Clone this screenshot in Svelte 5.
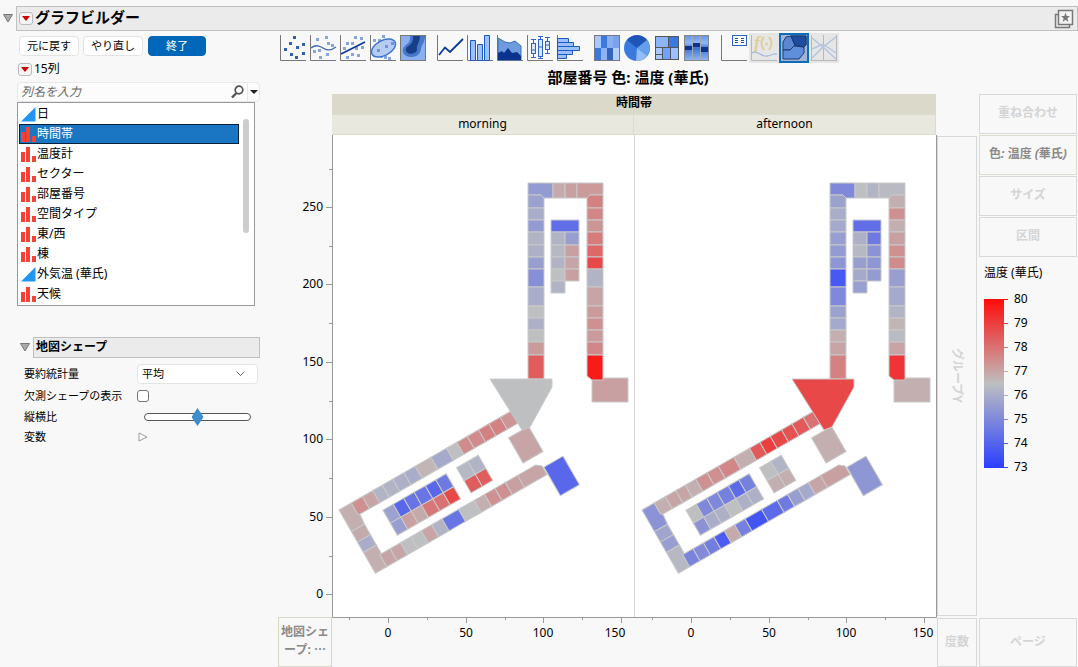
<script>
  let columns = [
    { name: "日", kind: "continuous" },
    { name: "時間帯", kind: "nominal" },
    { name: "温度計", kind: "nominal" },
    { name: "セクター", kind: "nominal" },
    { name: "部屋番号", kind: "nominal" },
    { name: "空間タイプ", kind: "nominal" },
    { name: "東/西", kind: "nominal" },
    { name: "棟", kind: "nominal" },
    { name: "外気温 (華氏)", kind: "continuous" },
    { name: "天候", kind: "nominal" }
  ];
  let selected = $state(1);
  let tool = $state("地図シェープ");

  const axes = `<path d="M2.500 2V27.500H28" fill="none" stroke="#777"/>`;
  const dots = (points, fill) =>
    points.map(([x, y]) => `<rect x="${x - 1}" y="${y - 1}" width="3" height="3" fill="${fill}"/>`).join("");

  const toolGroups = [
    [
      { name: "点", art: axes + dots([[16, 4], [12, 10], [25, 11], [7, 16], [19, 14], [13, 21], [25, 20], [18, 24]], "#2b62b8") },
      {
        name: "平滑線",
        art: axes + dots([[9, 6], [18, 4], [20, 10], [24, 12], [6, 18], [11, 17], [19, 21], [12, 24]], "#86a6dc") +
          `<path d="M3 15C8 11 12 13 16 15.500S24 17 28 14" fill="none" stroke="#3c66b0" stroke-width="1.300"/>`
      },
      {
        name: "あてはめ線",
        art: axes + dots([[17, 4], [9, 10], [14, 10], [23, 5], [6, 15], [24, 14], [18, 15], [9, 24], [14, 21], [20, 22]], "#86a6dc") +
          `<path d="M3 21L27 9" stroke="#0c3a9c" stroke-width="1.800"/>`
      },
      {
        name: "楕円",
        art: axes + dots([[6, 7], [15, 3], [11, 7], [6, 22], [13, 23], [17, 24], [21, 25]], "#86a6dc") +
          `<ellipse cx="15.500" cy="15" rx="13" ry="7.500" transform="rotate(-28 15.500 15)" fill="#b5cdf5" stroke="#3f74d0" stroke-width="1.500"/>` +
          dots([[18, 13], [24, 10], [10, 17]], "#6f94d8")
      },
      {
        name: "等高線",
        art: `<rect x="2.500" y="2.500" width="25" height="25" fill="#8ab0f0" stroke="#777"/>
          <path d="M12 3H27C27 9 24 11 23 16C22 22 18 24 13 24C7 24 4 20 5 16C6 11 13 12 12 3Z" fill="#4677c8"/>
          <path d="M15 3H22C22 9 18 12 19 17C18 22 8 22 8 17C8 12 16 13 15 3Z" fill="#173f88"/>`
      }
    ],
    [
      { name: "折れ線", art: axes + `<path d="M4 22L10 14.500L15 19L28 6" fill="none" stroke="#0c3a9c" stroke-width="1.800"/>` },
      {
        name: "棒",
        art: axes + `<g fill="#9cc0ff" stroke="#1c5cc0"><path d="M5.500 27.500V7.500H10.500V27.500Z"/><path d="M12.500 27.500V11.500H17.500V27.500Z"/><path d="M19.500 27.500V2.500H24.500V27.500Z"/></g>`
      },
      {
        name: "面積",
        art: axes + `<path d="M3 5L10 9L15 10L20 8L26 13V27H3Z" fill="#6d9bdc" stroke="#3a72b8"/>
          <path d="M3 20L7 18L9 20L13 15L17 20L22 19L26 23V27H3Z" fill="#0b328c"/>`
      },
      {
        name: "箱ひげ図",
        art: axes + `<g fill="#d9e7ff" stroke="#2c67c8"><path d="M8.500 7V10M8.500 21V24M6 6.500H11M6 24.500H11M15.500 3V6M15.500 23V26M13 3.500H18M13 25.500H18M22.500 4V8M22.500 16V20M20 4.500H25M20 20.500H25"/>
          <rect x="6.500" y="10.500" width="4" height="10"/><rect x="13.500" y="6.500" width="4" height="17"/><rect x="20.500" y="8.500" width="4" height="8"/><path d="M6 17H11M13 14H18M20 12H25"/></g>`
      },
      {
        name: "ヒストグラム",
        art: axes + `<g fill="#9cc0ff" stroke="#1c5cc0"><path d="M2.500 5.500H13.500V9.500H2.500ZM2.500 9.500H18.500V13.500H2.500ZM2.500 13.500H24.500V17.500H2.500ZM2.500 17.500H17.500V21.500H2.500ZM2.500 21.500H11.500V25.500H2.500Z"/></g>`
      }
    ],
    [
      {
        name: "ヒートマップ",
        art: ["#a9c8ff", "#3a7ade", "#8aaff2", "#7ba3ec", "#3a7ade", "#8fb4f6", "#3466be", "#b2cfff"]
          .map((c, i) => `<rect x="${3 + (i % 4) * 6}" y="${i < 4 ? 3 : 15}" width="6" height="12" fill="${c}"/>`).join("") +
          `<rect x="2.500" y="2.500" width="25" height="25" fill="none" stroke="#778"/>`
      },
      {
        name: "円",
        art: `<circle cx="15" cy="15" r="13" fill="#3a7ade"/><path d="M15 15L5 7A13 13 0 0 1 25 7Z" fill="#1f55b6"/>
          <path d="M15 15L25 7A13 13 0 0 1 25 23Z" fill="#64a0ea"/><path d="M15 15L25 23A13 13 0 0 1 14 28Z" fill="#93bdff"/>`
      },
      {
        name: "ツリーマップ",
        art: `<g stroke="#555"><rect x="3.500" y="3.500" width="13" height="11" fill="#8fb4f6"/><rect x="16.500" y="3.500" width="10" height="11" fill="#3a7ade"/>
          <rect x="3.500" y="14.500" width="7" height="12" fill="#a9c8ff"/><rect x="10.500" y="14.500" width="8" height="12" fill="#6ea2ff"/><rect x="18.500" y="14.500" width="8" height="12" fill="#9cc0ff"/><path d="M4 21.500H10"/></g>`
      },
      {
        name: "モザイク",
        art: `<defs><linearGradient id="mz" x2="0" y2="1"><stop offset="0" stop-color="#5f98ee"/><stop offset="0.300" stop-color="#8fb8fa"/><stop offset="0.500" stop-color="#3a74d0"/><stop offset="1" stop-color="#8fb8fa"/></linearGradient></defs>
          <rect x="2.500" y="2.500" width="24" height="25" fill="url(#mz)"/><path d="M3 13H10V17H3ZM11 10H18V14H11ZM19 14H26V19H19Z" fill="#0b328c"/>
          <path d="M10.500 3V27M18.500 3V27" stroke="#aaa"/><rect x="2.500" y="2.500" width="24" height="25" fill="none" stroke="#888"/>`
      }
    ],
    [
      {
        name: "表ボックス",
        art: axes + `<rect x="13.500" y="2.500" width="14" height="10" fill="#fff" stroke="#2c67c8"/><path d="M16 5.500H19M22 5.500H25M16 7.500H19M22 7.500H25M16 9.500H19M22 9.500H25" stroke="#2a4f98"/>`
      },
      {
        name: "計算式", off: true,
        art: `<path d="M2.500 2V27.500H28" fill="none" stroke="#b8b8b8"/><text x="5" y="16" font-family="Liberation Serif, serif" font-style="italic" font-weight="bold" font-size="18" fill="#dfcf98">f</text>
          <path d="M15 4Q10 10 15 17M20 4Q25 10 20 17" fill="none" stroke="#dfcf98" stroke-width="2"/><circle cx="17.500" cy="11" r="1.500" fill="#dfcf98"/>
          <path d="M3 20C8 16 12 24 18 23S24 20 28 21" fill="none" stroke="#a9bbdc" stroke-width="1.300"/>`
      },
      {
        name: "地図シェープ",
        art: `<g stroke="#1b3b70"><path d="M4 9L7 4L12 3L16 12L11 17L4 17Z" fill="#5b86d4"/><path d="M12 3H27V12L23 14L16 12Z" fill="#1f4c9e"/>
          <path d="M4 17H11L15 13L25 14L25 20L20 26H4Z" fill="#5f8edc"/><path d="M12 3L16 12L25 14L27 12V3Z" fill="#1f4c9e"/></g>`
      },
      {
        name: "パラレルプロット", off: true,
        art: `<g fill="none"><path d="M2.500 2V27M14.500 2V27M27.500 2V27M2 27.500H28" stroke="#b8b8b8"/><path d="M3 5L14 14L27 4M3 16L14 11L27 20M3 25L14 14L27 26" stroke="#b5c4de" stroke-width="1.500"/></g>`
      }
    ]
  ];

  // Average temperature (F) for each room, by time of day
  const panels = [
    {
      name: "morning",
      left: 55, zero: 55,
      north: {
        corner: 75.5, top: [76.9, 77.1], corner2: 77.2,
        west: [75.7, 76, 75.5, 76.2, 76.1, 75.6, 75.2, 76, 76.5, 76.1, 76.5, 77.2, 78.4],
        east: [77.7, 77.6, 77.3, 77.8, 78.2, 78.8, 76.2, 77, 77.2, 77.4, 77.2, 77.6, 79.7],
        annex: 77.1, head: 74.3, inWest: [76.2, 76.3, 76.2, 76.5, 76.2], inEast: [75.6, 77.1, 77, 77.1]
      },
      south: {
        upper: [77.4, 77, 76.2, 76.2, 76.1, 76, 76.7, 75.9, 76.5, 77.5, 77.5, 77.7, 77.7, 77.3],
        lower: [77, 77, 76.5, 76.5, 77, 76.2, 74.5, 76.5, 76.8, 77.4, 77.4, 77.1],
        wall: [76.8, 76.9, 76, 76.8], tip: 77,
        core: [75.7, 74.1, 74.5, 74.5, 74.1, 74.6, 75.6, 77.1, 76.9, 77.9, 78, 78.8],
        block: [76.3, 76.2, 78.4, 78.4], room: 77, annex: 74.1
      },
      lobby: 76.5
    },
    {
      name: "afternoon",
      left: 357, zero: 358,
      north: {
        corner: 75, top: [76.5, 76.2], corner2: 76.4,
        west: [75.7, 76, 75.9, 75.6, 75.5, 75.4, 73.7, 75, 75.7, 75.9, 76.8, 77, 77.7],
        east: [76.8, 77.4, 76.8, 77.1, 77.4, 77.5, 75.6, 75.9, 76.2, 76.7, 76.4, 77, 79.2],
        annex: 76.8, head: 74.3, inWest: [76.1, 76.3, 75.6, 75.9, 75.6], inEast: [74.6, 75.3, 75.4, 75.5]
      },
      south: {
        upper: [76.8, 77, 77, 76.8, 77.4, 77.4, 77.6, 76.8, 78.5, 79, 78.8, 78.6, 78.5, 78],
        lower: [74.9, 75.1, 74.7, 73.8, 76.9, 74.8, 73.6, 74.2, 74.6, 75.6, 75.9, 77],
        wall: [75.3, 75.8, 75.6, 76.3], tip: 77.1,
        core: [76.5, 75, 75, 74.8, 74.2, 74.8, 75.3, 76, 76.1, 76.5, 76.1, 76.1],
        block: [76.5, 76.2, 76.8, 76.8], room: 76.8, annex: 75.4
      },
      lobby: 78.8
    }
  ];

  const wingY = [60, 73, 85, 97, 110, 122, 134, 152, 171, 183, 195, 207, 220, 244];
  const upperX = [14, 27, 39, 50, 62, 75, 88, 106, 124, 136, 148, 161, 173, 186, 199];
  const lowerX = [13, 25, 37, 49, 61, 73, 85, 104, 122, 134, 146, 158, 172];
  const coreX = [38, 50, 62, 74, 87, 99, 111];
  const innerY = [97, 110, 122, 134, 146, 158];

  const box = (x1, y1, x2, y2) => `${x1},${y1} ${x2},${y1} ${x2},${y2} ${x1},${y2}`;

  function northRooms(n) {
    return [
      ["195,48 220,48 220,63 211,63 208,60 195,60", n.corner],
      [box(220, 48, 232, 63), n.top[0]],
      [box(232, 48, 244, 63), n.top[1]],
      ["244,48 270,48 270,60 257,60 254,63 244,63", n.corner2],
      ...n.west.map((v, i) => [
        i === 0 ? "195,60 208,60 211,63 211,73 195,73" : box(195, wingY[i], 211, wingY[i + 1]), v
      ]),
      [box(259, 243, 295, 267), n.annex],
      ...n.east.map((v, i) => [
        i === 0 ? "254,63 257,60 270,60 270,73 254,73"
          : i === 12 ? "254,220 270,220 270,245 259,245 254,241"
          : box(254, wingY[i], 270, wingY[i + 1]), v
      ]),
      [box(218, 85, 246, 97), n.head],
      ...n.inWest.map((v, i) => [box(218, innerY[i], 232, innerY[i + 1]), v]),
      ...n.inEast.map((v, i) => [box(232, innerY[i], 246, innerY[i + 1]), v])
    ];
  }

  function southRooms(s) {
    return [
      ...s.upper.map((v, i) => [box(upperX[i], 0, upperX[i + 1], 14), v]),
      ["0,0 14,0 14,12 16,15 15,25 0,25", s.wall[0]],
      [box(0, 25, 15, 37), s.wall[1]],
      [box(0, 37, 15, 49), s.wall[2]],
      ["0,49 15,49 15,58 13,61 13,73 0,73", s.wall[3]],
      ...s.lower.map((v, i) => [box(lowerX[i], 59, lowerX[i + 1], 73), v]),
      ["172,59 193,59 198,63 198,73 172,73", s.tip],
      ...s.core.map((v, i) => {
        const c = i % 6;
        return [i < 6 ? box(coreX[c], 22, coreX[c + 1], 37) : box(coreX[c], 37, coreX[c + 1], 51), v];
      }),
      [box(123, 22, 136, 37), s.block[0]],
      [box(136, 22, 148, 37), s.block[1]],
      [box(123, 37, 136, 51), s.block[2]],
      [box(136, 37, 148, 51), s.block[3]],
      [box(183, 22, 206, 51), s.room],
      [box(199, 65, 221, 98), s.annex]
    ];
  }

  // Blue - gray - red scale, 73 to 80 degrees
  function heat(value) {
    const t = (value - 76.5) / 3.5;
    const end = t < 0 ? [42, 62, 255] : [255, 10, 10];
    const rgb = [190, 191, 192].map((c, i) => Math.round(c + (end[i] - c) * Math.abs(t)));
    return `rgb(${rgb.join(",")})`;
  }

  const yTicks = [0, 50, 100, 150, 200, 250].map((v, i) => ({ v, y: Math.round(459 - i * 77.4) }));
  const yMinor = [0, 1, 2, 3, 4, 5, 6].map((i) => Math.round(498 - i * 77.4)).filter((y) => y < 482);
  const xTicks = [0, 50, 100, 150].map((v, i) => ({ v, x: Math.round(55 + i * 77.5) }));
  const xMinor = [94, 172, 249];
  const legend = [80, 79, 78, 77, 76, 75, 74, 73];
</script>

<div class="window">
  <header>
    <button class="fold" aria-label="折りたたむ"><svg width="10" height="9" viewBox="0 0 10 9"><path d="M0.500 0.500H9.500L5 8Z" fill="#aaa" stroke="#777" /></svg></button>
    <div class="title-bar">
      <button class="red" aria-label="メニュー"><svg width="8" height="5" viewBox="0 0 8 5"><path d="M0 0H8L4 5Z" fill="#c80000" /></svg></button>
      <h1>グラフビルダー</h1>
      <button class="star" aria-label="お気に入り">
        <svg width="20" height="20" viewBox="0 0 20 20" fill="none" stroke="#777">
          <path d="M4 5.500H1.500V18.500H15.500V16" stroke-width="1.500" />
          <rect x="4.500" y="1.500" width="14" height="14" fill="#f4f4f4" stroke-width="1.500" />
          <path d="M11.500 3.500L12.700 7H16L13.400 9.200L14.400 13L11.500 10.800L8.600 13L9.600 9.200L7 7H10.300Z" fill="#777" stroke="none" />
        </svg>
      </button>
    </div>
  </header>

  <div class="body">
    <aside>
      <div class="actions">
        <button>元に戻す</button>
        <button>やり直し</button>
        <button class="done">終了</button>
      </div>
      <div class="count">
        <button class="red" aria-label="列メニュー"><svg width="8" height="5" viewBox="0 0 8 5"><path d="M0 0H8L4 5Z" fill="#c80000" /></svg></button>
        15列
      </div>
      <div class="search">
        <input type="text" placeholder="列名を入力" aria-label="列名を入力" />
        <svg width="14" height="14" viewBox="0 0 14 14" fill="none" stroke="#555"><circle cx="8" cy="5" r="3.800" stroke-width="1.700" /><path d="M5.500 8L1 12.500" stroke-width="2.400" /></svg>
        <button aria-label="検索オプション"><svg width="8" height="4" viewBox="0 0 8 4"><path d="M0 0H8L4 4Z" fill="#222" /></svg></button>
      </div>
      <div class="list">
        <ul>
          {#each columns as column, i}
            <li>
              <button class:selected={selected === i} onclick={() => (selected = i)}>
                <svg width="15" height="15" viewBox="0 0 15 15">
                  {#if column.kind === "continuous"}
                    <path d="M0 14.500L14.500 0V14.500Z" fill="#2196f3" />
                  {:else}
                    <path d="M0 5H4V15H0ZM5 0H9V15H5ZM11 9H15V15H11Z" fill="#f44336" />
                  {/if}
                </svg>
                {column.name}
              </button>
            </li>
          {/each}
        </ul>
        <div class="scroll"></div>
      </div>

      <section>
        <div class="section-head">
          <button class="fold" aria-label="折りたたむ"><svg width="10" height="9" viewBox="0 0 10 9"><path d="M0.500 0.500H9.500L5 8Z" fill="#aaa" stroke="#777" /></svg></button>
          <h2>地図シェープ</h2>
        </div>
        <div class="options">
          <label for="stat">要約統計量</label>
          <div class="pick">
            <select id="stat"><option>平均</option></select>
            <svg width="9" height="6" viewBox="0 0 9 6"><path d="M0.500 0.500L4.500 4.500L8.500 0.500" fill="none" stroke="#666" /></svg>
          </div>
          <label for="missing">欠測シェープの表示</label>
          <input id="missing" type="checkbox" />
          <label for="aspect">縦横比</label>
          <input id="aspect" type="range" min="0" max="100" value="50" />
          <span>変数</span>
          <button class="fold" aria-label="変数を開く"><svg width="12" height="10" viewBox="0 0 12 10"><path d="M2 1L10 5L2 9Z" fill="#fff" stroke="#999" /></svg></button>
        </div>
      </section>
    </aside>

    <main>
      <nav>
        {#each toolGroups as group}
          <div class="tools">
            {#each group as item}
              <button
                class:active={tool === item.name}
                class:off={item.off}
                disabled={item.off}
                aria-label={item.name}
                onclick={() => (tool = item.name)}>
                <svg viewBox="0 0 30 30">{@html item.art}</svg>
              </button>
            {/each}
          </div>
        {/each}
      </nav>
      <h3>部屋番号 色: 温度 (華氏)</h3>

      <div class="graph">
        <div class="chart">
          <div class="group-x">
            <div class="group-name">時間帯</div>
            {#each panels as panel}
              <div class="level">{panel.name}</div>
            {/each}
          </div>
          <svg class="plot" viewBox="0 0 659 532">
            <rect x="54" y="0" width="605" height="482" fill="#fff" />
            {#each panels as panel}
              <g class="rooms">
                <g transform="translate({panel.left} 0)">
                  {#each northRooms(panel.north) as [points, value]}
                    <polygon {points} fill={heat(value)} />
                  {/each}
                </g>
                <g transform="translate({panel.zero + 6} 375) rotate(-29.9)">
                  {#each southRooms(panel.south) as [points, value]}
                    <polygon {points} fill={heat(value)} />
                  {/each}
                </g>
                <polygon
                  points="157,244 219,244 219,252 197,292 189,295"
                  transform="translate({panel.left} 0)"
                  fill={heat(panel.lobby)} />
              </g>
            {/each}
            <path class="divider" d="M356.500 0V482" />
            <g class="axis">
              <path d="M54.500 0V482.500H658.500V0" />
              {#each yTicks as tick}
                <path d="M48 {tick.y + 0.5}H54" />
                <text x="45" y={tick.y + 4} text-anchor="end">{tick.v}</text>
              {/each}
              {#each yMinor as y}
                <path d="M51 {y + 0.5}H54" />
              {/each}
              {#each panels as panel}
                <g transform="translate({panel.zero} 482)">
                  {#each xTicks as tick}
                    <path d="M{tick.x + 0.5} 0V6" />
                    <text x={Math.min(tick.x, panel.left === 55 ? 282 : 287)} y="20" text-anchor="middle">{tick.v}</text>
                  {/each}
                  {#each xMinor as x}
                    <path d="M{x + 0.5} 0V3" />
                  {/each}
                </g>
              {/each}
              <path d="M71.500 482V485M374.500 482V485" />
            </g>
            <rect class="corner" x="0.500" y="482.500" width="53" height="49" />
            <text class="corner-text" x="27" y="501" text-anchor="middle">地図シェ</text>
            <text class="corner-text" x="27" y="519" text-anchor="middle">ープ: ⋯</text>
          </svg>
        </div>

        <div class="strip">
          <div class="zone group-y"><span>グループY</span></div>
          <div class="zone freq">度数</div>
        </div>

        <div class="side">
          <div class="zone">重ね合わせ</div>
          <div class="zone filled"><span>色<i>:</i> 温度 <i>(</i>華氏<i>)</i></span></div>
          <div class="zone">サイズ</div>
          <div class="zone">区間</div>
          <div class="legend">
            <div class="legend-title">温度 (華氏)</div>
            <svg width="60" height="190" viewBox="0 0 60 190">
              <defs>
                <linearGradient id="scale" x2="0" y2="1">
                  <stop offset="0" stop-color={heat(80)} />
                  <stop offset="0.5" stop-color={heat(76.5)} />
                  <stop offset="1" stop-color={heat(73)} />
                </linearGradient>
              </defs>
              <rect x="0" y="10" width="20" height="169" fill="url(#scale)" />
              {#each legend as value, i}
                <path d="M20 {10.5 + i * 24}H24" stroke={heat(value)} />
                <text x="30" y={14 + i * 24}>{value}</text>
              {/each}
            </svg>
          </div>
          <div class="zone page">ページ</div>
        </div>
      </div>
    </main>
  </div>
</div>

<style>
  :global(body) {
    margin: 0;
    background: #f8f8f8;
  }

  .window {
    min-height: 100vh;
    font: 12px/20px "Noto Sans", "Noto Sans CJK JP", sans-serif;
    color: #000;
    background: #f8f8f8;
  }

  .window * {
    box-sizing: border-box;
  }

  button {
    padding: 0;
    border: 0;
    background: none;
    font: inherit;
    color: inherit;
  }

  svg {
    display: block;
    flex: none;
  }

  h1, h2, h3, ul {
    margin: 0;
    padding: 0;
  }

  header {
    display: flex;
    align-items: center;
    padding: 6px 0 0 3px;
  }

  .title-bar {
    display: flex;
    flex: 1;
    align-items: center;
    height: 25px;
    margin-left: 3px;
    padding: 0 3px 0 2px;
    border: 1px solid #c0c0c0;
    background: #ebebeb;
  }

  h1 {
    flex: 1;
    margin-left: 2px;
    padding-bottom: 4px;
    font-size: 15px;
    line-height: 20px;
  }

  .red {
    display: flex;
    align-items: center;
    justify-content: center;
    width: 14px;
    height: 13px;
    border: 1px solid #bbb;
    border-radius: 3px;
    background: #f4f4f4;
  }

  .body {
    display: flex;
  }

  aside {
    flex: none;
    width: 278px;
    padding: 5px 18px 0 17px;
  }

  .actions {
    display: flex;
    gap: 4px;
    padding-left: 2px;
  }

  .actions button {
    width: 60px;
    height: 20px;
    border: 1px solid #e4e4e4;
    border-radius: 4px;
    background: #fff;
    font-size: 11px;
    line-height: 16px;
  }

  .actions .done {
    width: 58px;
    margin-left: 1px;
    border-color: #0067b8;
    background: #0067b8;
    color: #fff;
  }

  .count {
    display: flex;
    gap: 2px;
    align-items: center;
    height: 26px;
    padding-left: 1px;
  }

  .search {
    display: flex;
    align-items: center;
    height: 20px;
    border: 1px solid #e8e8e8;
    border-radius: 4px;
    background: #fcfcfc;
  }

  .search input {
    flex: 1;
    min-width: 0;
    padding: 0 3px;
    border: 0;
    background: none;
    font: italic 12px/18px "Noto Sans", "Noto Sans CJK JP", sans-serif;
  }

  .search input::placeholder {
    color: #666;
  }

  .search button {
    display: flex;
    align-items: center;
    justify-content: center;
    width: 12px;
    height: 18px;
    margin-left: 2px;
    border-left: 1px solid #e8e8e8;
  }

  .list {
    display: flex;
    width: 238px;
    padding: 1px 5px 1px 1px;
    border: 1px solid #999;
    background: #fff;
  }

  ul {
    flex: 1;
    list-style: none;
  }

  li button {
    display: flex;
    gap: 1px;
    align-items: center;
    width: 100%;
    height: 20px;
    padding-left: 1px;
    border: 1px solid transparent;
    line-height: 18px;
  }

  li .selected {
    border-color: #08203a;
    background: #1a76c2;
    color: #fff;
  }

  .scroll {
    width: 6px;
    height: 114px;
    margin: 15px 0 0 4px;
    border-radius: 3px;
    background: #cdcdcd;
  }

  section {
    margin-top: 31px;
  }

  .section-head {
    display: flex;
    gap: 3px;
    align-items: center;
    padding-left: 3px;
  }

  h2 {
    flex: 1;
    height: 21px;
    padding-left: 2px;
    border: 1px solid #c0c0c0;
    background: #ebebeb;
    font-size: 12px;
    line-height: 18px;
  }

  .options {
    display: grid;
    grid-template-columns: 113px 1fr;
    grid-template-rows: 22px 22px 20px 20px;
    align-items: center;
    padding: 5px 2px 0 7px;
    font-size: 11px;
    line-height: 18px;
  }

  .pick {
    display: flex;
    align-items: center;
    height: 20px;
    padding-right: 12px;
    border: 1px solid #e4e4e4;
    border-radius: 4px;
    background: #fff;
  }

  select {
    flex: 1;
    padding: 0 4px;
    border: 0;
    appearance: none;
    background: none;
    font: inherit;
    color: inherit;
  }

  input[type="checkbox"] {
    width: 12px;
    height: 12px;
    margin: 0;
    border: 1px solid #777;
    border-radius: 3px;
    appearance: none;
    background: #fff;
  }

  input[type="range"] {
    width: 107px;
    height: 8px;
    margin: 0 0 0 7px;
    border: 1px solid #555;
    border-radius: 4px;
    appearance: none;
    background: #fff;
  }

  input[type="range"]::-webkit-slider-thumb {
    width: 12px;
    height: 18px;
    appearance: none;
    background: #3f8dcc;
    clip-path: polygon(50% 0, 100% 50%, 50% 100%, 0 50%);
  }

  main {
    flex: 1;
    min-width: 0;
  }

  nav {
    display: flex;
    gap: 7px;
    padding-top: 2px;
  }

  .tools {
    display: flex;
  }

  .tools button {
    width: 30px;
    height: 30px;
  }

  .tools .off {
    background: #e6e6e6;
  }

  .tools .active {
    background: #a3b4d4;
    outline: 2px solid #0f6cb8;
    outline-offset: -2px;
  }

  h3 {
    height: 31px;
    padding-right: 100px;
    font-size: 15px;
    line-height: 28px;
    text-align: center;
  }

  .graph {
    display: flex;
  }

  .chart {
    flex: 1;
    min-width: 0;
  }

  .group-x {
    display: grid;
    grid-template-columns: 1fr 1fr;
    margin: 0 1px 0 54px;
    text-align: center;
  }

  .group-name {
    grid-column: 1 / 3;
    height: 20px;
    background: #dbd9c9;
    font-weight: bold;
    line-height: 18px;
  }

  .level {
    height: 21px;
    border: 1px solid #dcdccc;
    border-left: 0;
    background: #e8e8df;
    line-height: 18px;
  }

  .plot {
    width: 100%;
    height: auto;
  }

  .rooms polygon {
    stroke: #c8c9ca;
    stroke-width: 1;
  }

  .divider {
    stroke: #d8d8d8;
  }

  .axis path {
    fill: none;
    stroke: #999;
  }

  .corner {
    fill: #f8f8f8;
    stroke: #d8d8c6;
  }

  .corner-text {
    fill: #8a8a8a;
    font-weight: bold;
  }

  .strip {
    display: flex;
    flex-direction: column;
    gap: 2px;
    flex: none;
    width: 42px;
    padding: 42px 2px 0 0;
  }

  .side {
    display: flex;
    flex-direction: column;
    gap: 1px;
    flex: none;
    width: 99px;
    padding-right: 1px;
  }

  .zone {
    display: flex;
    align-items: center;
    justify-content: center;
    height: 40px;
    padding-bottom: 2px;
    border: 1px solid #d8d8d8;
    font-weight: bold;
    color: #d4d4d4;
    white-space: nowrap;
  }

  .filled {
    border-color: #dcdccc;
    color: #8a8a8a;
  }

  .group-y {
    flex: 1;
  }

  .group-y span {
    writing-mode: vertical-rl;
    text-orientation: sideways;
  }

  .strip .freq,
  .side .page {
    height: 49px;
  }

  .legend {
    flex: 1;
    padding: 5px 0 0 5px;
  }

  .legend-title {
    height: 26px;
  }
</style>
